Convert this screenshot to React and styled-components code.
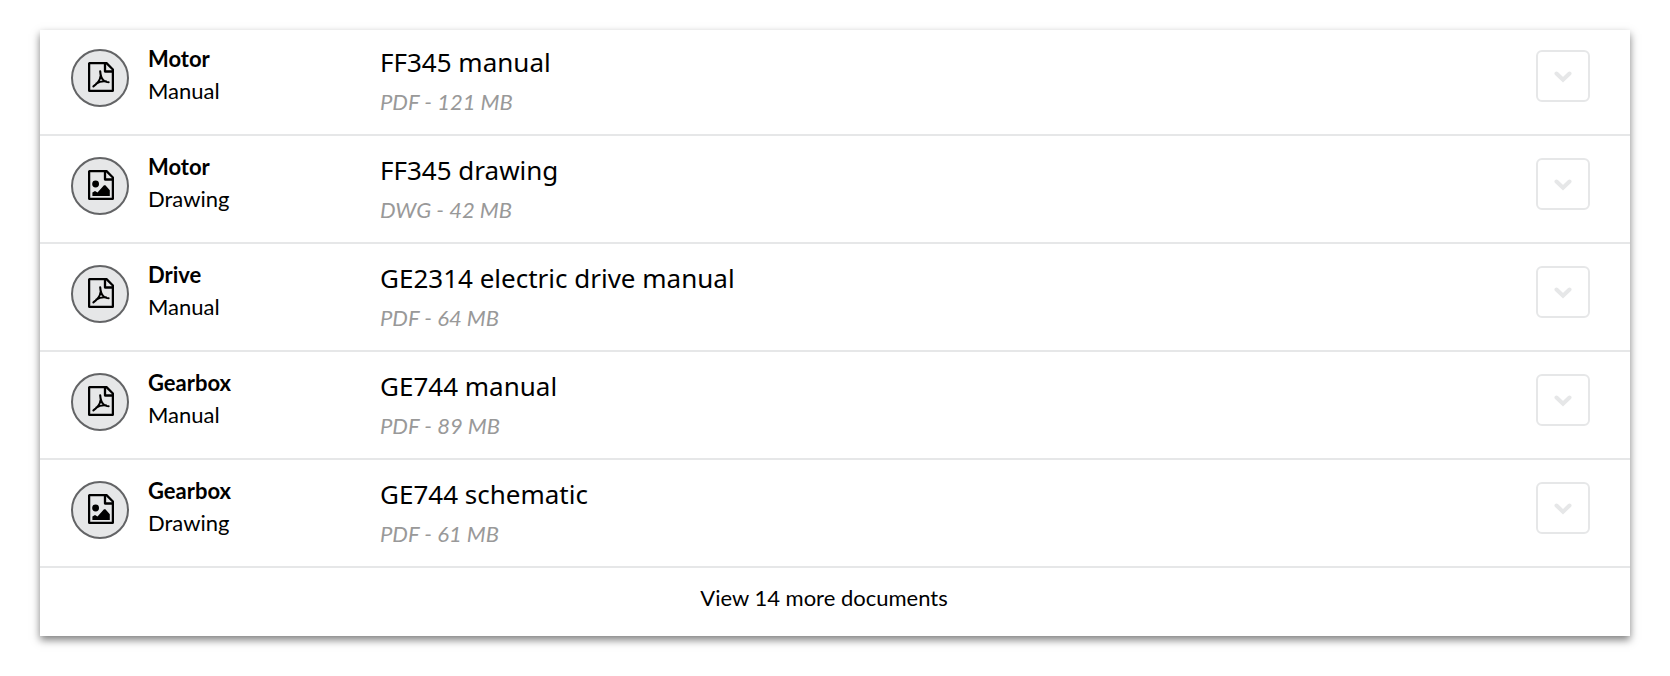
import React from 'react';
import styled, { createGlobalStyle } from 'styled-components';

const GlobalStyle = createGlobalStyle`
  *, *::before, *::after { box-sizing: border-box; }
  body {
    margin: 0;
    background: #fff;
    color: #000;
    font-family: Lato, "Noto Sans", sans-serif;
    font-size: 22px;
  }
`;

const Page = styled.main`
  padding: 30px 40px 40px;
`;

const Card = styled.section`
  background: #fff;
  box-shadow: 0 4px 8px rgba(0, 0, 0, 0.5);
`;

const List = styled.ul`
  margin: 0;
  padding: 0;
  list-style: none;
`;

const Row = styled.li`
  display: grid;
  grid-template-columns: 58px 213px 1fr 54px;
  column-gap: 19px;
  align-items: start;
  padding: 21px 40px 22px 31px;
  border-bottom: 2px solid #e6e7e8;

  &:first-child {
    padding-top: 19px;
  }
`;

const Badge = styled.span`
  display: flex;
  align-items: center;
  justify-content: center;
  width: 58px;
  height: 58px;
  padding: 0 0 2px 2px;
  border: 2px solid #636466;
  border-radius: 50%;
  background: #e6e7e8;
`;

const Stack = styled.div`
  display: flex;
  flex-direction: column;
`;

const Equipment = styled.strong`
  font-weight: 700;
  line-height: 32px;
  margin-top: -6px;
`;

const Kind = styled.span`
  line-height: 32px;
`;

const Title = styled.h2`
  margin: -6px 0 0;
  font-family: "Noto Sans", sans-serif;
  font-size: 26px;
  font-weight: 400;
  line-height: 38px;
`;

const Meta = styled.em`
  color: #999;
  line-height: 42px;
  margin-bottom: -11px;
`;

const Toggle = styled.button`
  display: flex;
  align-items: center;
  justify-content: center;
  width: 54px;
  height: 52px;
  margin: 1px 0 0;
  padding: 2px 0 0;
  border: 2px solid #e6e7e8;
  border-radius: 6px;
  background: #fff;
  color: #e6e7e8;
  cursor: pointer;
`;

const Footer = styled.footer`
  display: flex;
  justify-content: center;
  padding: 13px 22px 21px 0;
`;

const MoreButton = styled.button`
  padding: 0;
  border: 0;
  background: none;
  color: inherit;
  font: inherit;
  line-height: 34px;
  cursor: pointer;
`;

function FileIcon({ type }) {
  return (
    <svg width="26" height="30" viewBox="0 0 26 30" fill="none" stroke="#000" strokeWidth="2.3" strokeLinejoin="round" aria-hidden="true">
      <path d="M2 1.1H18.5L24.9 7.5V28.1Q24.9 28.9 24.1 28.9H1.9Q1.1 28.9 1.1 28.1V1.9Q1.1 1.1 2 1.1Z" />
      <path d="M17 1V9.5H25" />
      {type === 'pdf' ? (
        <path
          d="M12.2 9.2C12.4 13.3 12.9 16.4 16.3 19C17.8 20 19.2 20.2 20.6 20.2M12.6 14C12.1 18.3 9 21.8 5.4 24.3M8.2 21.7C11.4 19.6 14.8 18.9 18 19.4"
          strokeWidth="2.1"
          strokeLinecap="round"
        />
      ) : (
        <g fill="#000" stroke="none">
          <circle cx="7.6" cy="14" r="3.4" />
          <path d="M4.4 26V22.6L7 21L9.5 22.4L16 15.2H17.4L21.8 20.3V26Z" />
        </g>
      )}
    </svg>
  );
}

function ChevronIcon() {
  return (
    <svg width="18" height="12" viewBox="0 0 18 12" fill="none" stroke="currentColor" strokeWidth="4" strokeLinecap="round" aria-hidden="true">
      <path d="M2.5 2.5L9 8.8L15.5 2.5" />
    </svg>
  );
}

const documents = [
  { equipment: 'Motor', kind: 'Manual', title: 'FF345 manual', meta: 'PDF - 121 MB' },
  { equipment: 'Motor', kind: 'Drawing', title: 'FF345 drawing', meta: 'DWG - 42 MB' },
  { equipment: 'Drive', kind: 'Manual', title: 'GE2314 electric drive manual', meta: 'PDF - 64 MB' },
  { equipment: 'Gearbox', kind: 'Manual', title: 'GE744 manual', meta: 'PDF - 89 MB' },
  { equipment: 'Gearbox', kind: 'Drawing', title: 'GE744 schematic', meta: 'PDF - 61 MB' },
];

export default function App() {
  return (
    <>
      <GlobalStyle />
      <Page>
        <Card>
          <List>
            {documents.map((doc) => (
              <Row key={doc.title}>
                <Badge>
                  <FileIcon type={doc.kind === 'Manual' ? 'pdf' : 'image'} />
                </Badge>
                <Stack>
                  <Equipment>{doc.equipment}</Equipment>
                  <Kind>{doc.kind}</Kind>
                </Stack>
                <Stack>
                  <Title>{doc.title}</Title>
                  <Meta>{doc.meta}</Meta>
                </Stack>
                <Toggle type="button" aria-label={`Show details of ${doc.title}`}>
                  <ChevronIcon />
                </Toggle>
              </Row>
            ))}
          </List>
          <Footer>
            <MoreButton type="button">View 14 more documents</MoreButton>
          </Footer>
        </Card>
      </Page>
    </>
  );
}
